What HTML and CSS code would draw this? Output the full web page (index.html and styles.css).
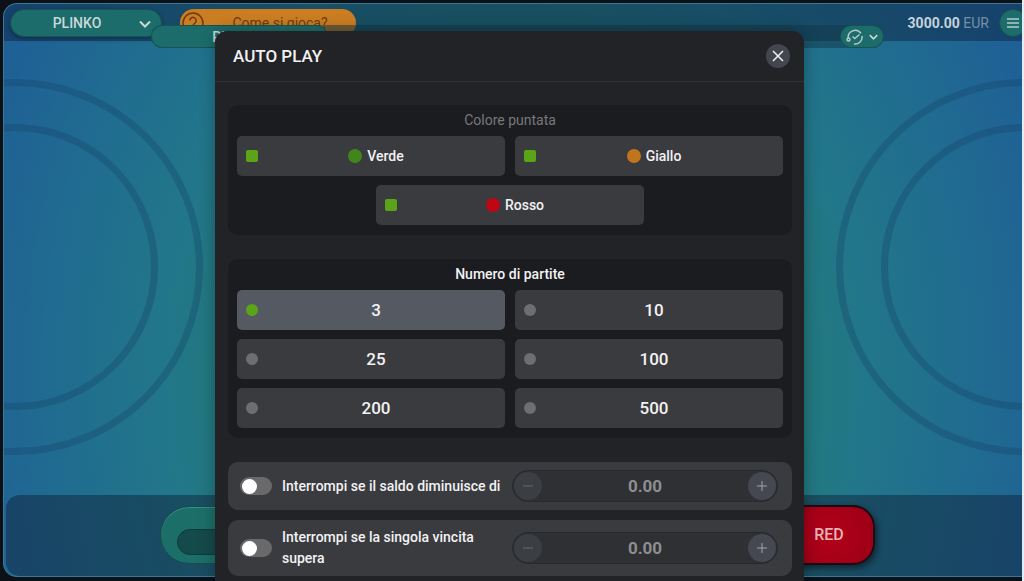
FILE: index.html
```html
<!DOCTYPE html>
<html lang="it">
  <head>
    <meta charset="UTF-8" />
    <meta name="viewport" content="width=device-width, initial-scale=1.0" />
    <title>Plinko - Auto Play</title>
    <link rel="stylesheet" href="styles.css">
  </head>
  <body>
    <div class="game">
      <div class="rings rings-left"></div>
      <div class="rings rings-right"></div>

      <header class="topbar">
        <div class="picker game-picker">
          <select aria-label="Gioco">
            <option>PLINKO</option>
          </select>
          <svg class="chevron" viewBox="0 0 12 8" aria-hidden="true"><path d="M1 1.5 6 6.5 11 1.5" /></svg>
        </div>
        <button class="how-btn">
          <svg class="how-icon" viewBox="0 0 22 22" aria-hidden="true">
            <circle cx="11" cy="11" r="10" />
            <path d="M7.8 8.6a3.2 3.2 0 1 1 4.9 2.7c-1.1.7-1.7 1.3-1.7 2.7M11 16v1.6" />
          </svg>
          <span>Come si gioca?</span>
        </button>
        <div class="balance"><b>3000.00</b> <span>EUR</span></div>
        <button class="menu-btn" aria-label="Menu">
          <svg viewBox="0 0 14 12" aria-hidden="true"><path d="M1 2h12M1 6h12M1 10h12" /></svg>
        </button>
      </header>

      <div class="subbar">
        <div class="picker pins-picker">
          <select aria-label="Pins">
            <option>PINS: 14</option>
          </select>
        </div>
        <button class="history-btn" aria-label="Cronologia">
          <svg class="history-icon" viewBox="0 0 18 18" aria-hidden="true">
            <path d="M2.3 10.5A7 7 0 0 1 15 5.400M16 8a7 7 0 0 1-8 8" />
            <path d="m6.500 8.500 2.300 2 4.700-4" />
            <circle cx="2.500" cy="11.500" r="1.500" />
          </svg>
          <svg class="chevron" viewBox="0 0 12 8" aria-hidden="true"><path d="M1 1.5 6 6.5 11 1.5" /></svg>
        </button>
      </div>

      <footer class="betbar">
        <div class="bet-box">
          <input type="text" aria-label="Puntata" />
        </div>
        <button class="red-btn">RED</button>
      </footer>
    </div>

    <div class="overlay">
      <div class="modal" role="dialog" aria-labelledby="modal-title">
        <div class="modal-header">
          <h1 id="modal-title">AUTO PLAY</h1>
          <button class="close-btn" aria-label="Chiudi">
            <svg viewBox="0 0 12 12" aria-hidden="true"><path d="M1 1 11 11M11 1 1 11" /></svg>
          </button>
        </div>

        <div class="modal-body">
          <section class="panel" role="group" aria-labelledby="color-title">
            <h2 id="color-title" class="muted">Colore puntata</h2>
            <div class="options">
              <label class="option">
                <input type="checkbox" checked />
                <span class="option-text"><i class="ball green"></i>Verde</span>
              </label>
              <label class="option">
                <input type="checkbox" checked />
                <span class="option-text"><i class="ball yellow"></i>Giallo</span>
              </label>
              <label class="option">
                <input type="checkbox" checked />
                <span class="option-text"><i class="ball red"></i>Rosso</span>
              </label>
            </div>
          </section>

          <section class="panel" role="radiogroup" aria-labelledby="rounds-title">
            <h2 id="rounds-title">Numero di partite</h2>
            <div class="options rounds">
              <label class="option"><input type="radio" name="rounds" checked /><span class="option-text">3</span></label>
              <label class="option"><input type="radio" name="rounds" /><span class="option-text">10</span></label>
              <label class="option"><input type="radio" name="rounds" /><span class="option-text">25</span></label>
              <label class="option"><input type="radio" name="rounds" /><span class="option-text">100</span></label>
              <label class="option"><input type="radio" name="rounds" /><span class="option-text">200</span></label>
              <label class="option"><input type="radio" name="rounds" /><span class="option-text">500</span></label>
            </div>
          </section>

          <div class="limits">
            <div class="limit">
              <input type="checkbox" class="switch" id="stop-balance" />
              <label for="stop-balance">Interrompi se il saldo diminuisce di</label>
              <div class="stepper">
                <button aria-label="Meno" disabled><svg viewBox="0 0 12 12" aria-hidden="true"><path d="M1 6h10" /></svg></button>
                <input type="text" value="0.00" aria-label="Importo diminuzione saldo" />
                <button aria-label="Più"><svg viewBox="0 0 12 12" aria-hidden="true"><path d="M1 6h10M6 1v10" /></svg></button>
              </div>
            </div>
            <div class="limit">
              <input type="checkbox" class="switch" id="stop-win" />
              <label for="stop-win">Interrompi se la singola vincita supera</label>
              <div class="stepper">
                <button aria-label="Meno" disabled><svg viewBox="0 0 12 12" aria-hidden="true"><path d="M1 6h10" /></svg></button>
                <input type="text" value="0.00" aria-label="Importo singola vincita" />
                <button aria-label="Più"><svg viewBox="0 0 12 12" aria-hidden="true"><path d="M1 6h10M6 1v10" /></svg></button>
              </div>
            </div>
          </div>
        </div>
      </div>
    </div>
  </body>
</html>
```
FILE: styles.css
```css
* {
  box-sizing: border-box;
}
body {
  margin: 0;
  height: 100vh;
  padding: 3px 0 4px 3px;
  display: flex;
  position: relative;
  overflow: hidden;
  background-color: #0c1017;
  border-right: 2px solid #e4edf4;
  font-family: Roboto, sans-serif;
  font-size: 14px;
  color: #f2f2f3;
}
button,
select,
input {
  margin: 0;
  font-family: inherit;
  color: inherit;
}
button {
  padding: 0;
  border: none;
  cursor: pointer;
}
svg {
  display: block;
  fill: none;
  stroke: currentColor;
  stroke-width: 1.5;
}

/* game table behind the dialog */
.game {
  flex: 1;
  display: flex;
  flex-direction: column;
  position: relative;
  overflow: hidden;
  border: 1px solid #3b7894;
  border-right: none;
  border-radius: 14px 0 0 14px;
  background: radial-gradient(ellipse 56% 130% at 50% 66%, #227a74 42%, #22768a 62%, #206c90 80%, #1f5f96 100%);
}
.rings {
  position: absolute;
  top: 75px;
  width: 376px;
  height: 376px;
  border: 7px solid rgba(22, 70, 105, 0.36);
  border-radius: 50%;
}
.rings::after {
  content: "";
  position: absolute;
  inset: 38px;
  border: 7px solid rgba(22, 70, 105, 0.36);
  border-radius: 50%;
}
.rings-left {
  left: -177px;
}
.rings-right {
  right: -190px;
}
.topbar {
  display: flex;
  align-items: center;
  height: 37px;
  padding-left: 6px;
  background-color: rgba(14, 38, 68, 0.5);
}
.picker {
  position: relative;
}
.picker select {
  appearance: none;
  width: 100%;
  height: 100%;
  border: 1px solid #17534f;
  border-radius: 14px;
  background-color: #1c6c6b;
  text-align: center;
  text-align-last: center;
  font-size: 14px;
  font-weight: 500;
  color: #c9d8d9;
}
.game-picker {
  width: 152px;
  height: 28px;
}
.game-picker select {
  padding: 0 28px 0 10px;
  box-shadow: 0 2px 4px rgba(8, 30, 60, 0.5);
}
.chevron {
  width: 12px;
  height: 8px;
  stroke-width: 2;
  color: #c9d8d9;
}
.game-picker .chevron {
  position: absolute;
  right: 11px;
  top: 11px;
  pointer-events: none;
}
.how-btn {
  display: flex;
  align-items: center;
  width: 176px;
  height: 28px;
  margin-left: 18px;
  padding-left: 2px;
  border-radius: 14px;
  background-color: #cb7d22;
  color: #6f3a10;
  font-size: 14px;
}
.how-icon {
  width: 22px;
  height: 22px;
}
.how-btn span {
  flex: 1;
}
.balance {
  margin-left: auto;
  color: #7590a6;
}
.balance b {
  font-weight: 700;
  color: #c5d2dc;
}
.menu-btn {
  display: grid;
  place-items: center;
  width: 28px;
  height: 28px;
  margin: 0 -5px 0 10px;
  border: 1px solid #17534f;
  border-radius: 50%;
  background-color: #1c6c6b;
  color: #b4cacb;
}
.menu-btn svg {
  width: 14px;
  height: 12px;
}
.subbar {
  position: relative;
  display: flex;
  justify-content: space-between;
  height: 23px;
  margin: -16px 138px 0 147px;
  border-radius: 12px;
  background-color: rgba(18, 56, 72, 0.5);
}
.pins-picker {
  width: 177px;
}
.history-btn {
  display: flex;
  align-items: center;
  justify-content: center;
  gap: 5px;
  width: 44px;
  border: 1px solid #17534f;
  border-radius: 12px;
  background-color: #1c6c6b;
  color: #b4cacb;
}
.history-icon {
  width: 18px;
  height: 18px;
}
.history-btn .chevron {
  width: 9px;
  height: 6px;
}
.betbar {
  position: relative;
  display: flex;
  align-items: center;
  justify-content: space-between;
  height: 81px;
  margin: auto 0 0 2px;
  padding: 0 147px 2px 154px;
  border-radius: 14px 0 0 14px;
  background-color: rgba(16, 36, 60, 0.5);
}
.bet-box {
  display: flex;
  align-items: flex-end;
  width: 200px;
  height: 58px;
  padding: 8px 16px;
  border: 1px solid #164c4e;
  border-radius: 29px;
  background-color: #1b6f68;
  box-shadow: inset 0 1px 0 #3d8a86;
}
.bet-box input {
  width: 100%;
  height: 26px;
  border: 1px solid #10393c;
  border-radius: 13px;
  background-color: #154a4a;
}
.red-btn {
  width: 92px;
  height: 60px;
  border: 2px solid #1c0a12;
  border-radius: 0 22px 22px 0;
  background: radial-gradient(circle, #b3001a, #9a0016);
  box-shadow: 2px 3px 6px rgba(0, 0, 0, 0.5);
  color: #e3b3b6;
  font-size: 16px;
  font-weight: 500;
}

/* auto play dialog */
.overlay {
  position: absolute;
  inset: 0;
  display: flex;
  justify-content: center;
  padding: 31px 3px 0 0;
}
.modal {
  width: 100%;
  max-width: 589px;
  overflow: hidden;
  border-radius: 12px 12px 0 0;
  background-color: #222327;
  box-shadow: 0 0 16px rgba(0, 0, 0, 0.3);
}
.modal-header {
  display: flex;
  align-items: center;
  justify-content: space-between;
  height: 51px;
  padding: 0 14px 0 18px;
  border-bottom: 1px solid #313236;
}
h1 {
  margin: 0;
  font-size: 17px;
  font-weight: 500;
}
.close-btn {
  display: grid;
  place-items: center;
  width: 24px;
  height: 24px;
  border-radius: 50%;
  background-color: #43454f;
}
.close-btn svg {
  width: 12px;
  height: 12px;
}
.modal-body {
  display: flex;
  flex-direction: column;
  gap: 24px;
  padding: 23px 12px 12px 13px;
}
.panel {
  padding: 0 9px 10px;
  border-radius: 10px;
  background-color: #1b1c1f;
}
h2 {
  margin: 0;
  line-height: 31px;
  text-align: center;
  font-size: 14px;
  font-weight: 500;
}
h2.muted {
  font-weight: 400;
  color: #77787b;
}
.options {
  display: flex;
  flex-wrap: wrap;
  justify-content: center;
  gap: 9px 10px;
}
.option {
  display: flex;
  align-items: center;
  width: calc(50% - 5px);
  height: 40px;
  padding: 0 11px 0 9px;
  border-radius: 5px;
  background-color: #3a3b3f;
  cursor: pointer;
}
.option:has(input[type="radio"]:checked) {
  background-color: #555961;
}
.option input {
  appearance: none;
  width: 12px;
  height: 12px;
  border-radius: 2px;
  background-color: #6d6e72;
}
.option input[type="radio"] {
  border-radius: 50%;
}
.option input:checked {
  background-color: #5ba318;
}
.option-text {
  flex: 1;
  display: flex;
  align-items: center;
  justify-content: center;
  gap: 5px;
  font-weight: 500;
}
.rounds .option-text {
  font-size: 17px;
}
.ball {
  width: 14px;
  height: 14px;
  border-radius: 50%;
}
.green {
  background-color: #41861a;
}
.yellow {
  background-color: #c0741d;
}
.red {
  background-color: #c00612;
}
.limits {
  display: flex;
  flex-direction: column;
  gap: 10px;
}
.limit {
  display: flex;
  align-items: center;
  gap: 10px;
  min-height: 48px;
  padding: 7px 14px 7px 12px;
  border-radius: 10px;
  background-color: #3a3b3f;
}
.limit label {
  flex: 1;
  line-height: 21px;
  font-weight: 500;
}
.switch {
  appearance: none;
  flex: none;
  display: flex;
  align-items: center;
  width: 32px;
  height: 18px;
  padding: 0 2px;
  border-radius: 9px;
  background-color: #69696c;
}
.switch::before {
  content: "";
  width: 15px;
  height: 15px;
  border-radius: 50%;
  background-color: #fff;
}
.switch:checked {
  background-color: #5ba318;
  justify-content: flex-end;
}
.stepper {
  display: flex;
  align-items: center;
  width: 266px;
  height: 32px;
  padding: 1px;
  border: 1px solid #28292c;
  border-radius: 16px;
  background-color: #2f3033;
}
.stepper input {
  flex: 1;
  min-width: 0;
  padding: 0;
  border: none;
  background: none;
  text-align: center;
  font-size: 17px;
  font-weight: 700;
  color: #8d8e91;
}
.stepper button {
  display: grid;
  place-items: center;
  width: 28px;
  height: 28px;
  border-radius: 50%;
  background-color: #454850;
  color: #a2a4aa;
}
.stepper button:disabled {
  background-color: #3b3e42;
  color: #66686c;
}
.stepper svg {
  width: 12px;
  height: 12px;
  stroke-width: 1;
}
```
